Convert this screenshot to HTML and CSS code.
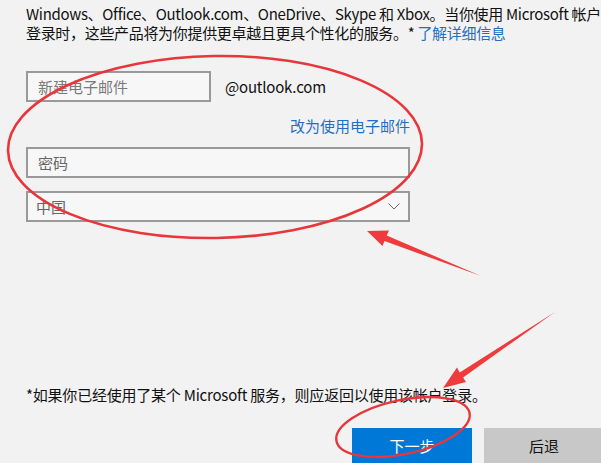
FILE: index.html
```html
<!DOCTYPE html>
<html lang="zh-CN">
<head>
<meta charset="utf-8">
<link rel="stylesheet" href="styles.css">
</head>
<body>
<div class="page">
  <p class="intro">Windows、Office、Outlook.com、OneDrive、Skype 和 Xbox。当你使用 Microsoft 帐户<br>登录时，这些产品将为你提供更卓越且更具个性化的服务。* <a class="link" href="#">了解详细信息</a></p>

  <div class="form">
    <div class="email-row">
      <div class="field field-email"><span class="placeholder">新建电子邮件</span></div>
      <span class="domain">@outlook.com</span>
    </div>
    <div class="switch-row"><a class="link" href="#">改为使用电子邮件</a></div>
    <div class="field field-wide"><span class="placeholder pw">密码</span></div>
    <div class="field field-wide select">
      <span class="select-value">中国</span>
      <svg class="chevron" width="12" height="7" viewBox="0 0 12 7"><path d="M0.5 0.5 L6 6 L11.5 0.5" fill="none" stroke="#6a6a6a" stroke-width="1"/></svg>
    </div>
  </div>

  <p class="note">*如果你已经使用了某个 Microsoft 服务，则应返回以使用该帐户登录。</p>

  <div class="buttons">
    <div class="btn btn-primary">下一步</div>
    <div class="btn btn-secondary">后退</div>
  </div>
</div>

<svg class="annotations" width="601" height="463" viewBox="0 0 601 463">
  <ellipse cx="215" cy="147" rx="207" ry="91" transform="rotate(-1 215 147)" fill="none" stroke="#e8363a" stroke-width="2.6"/>
  <ellipse cx="403" cy="427" rx="68" ry="27" transform="rotate(-12 403 427)" fill="none" stroke="#e8363a" stroke-width="2.4"/>
  <polygon points="367,231 389,230.5 386.7,235.5 481,276 384.5,241.1 382.5,246" fill="#ef3b3b"/>
  <polygon points="443,388 457,367.5 459.7,372.4 555,312 463.1,377.4 466,382" fill="#ef3b3b"/>
</svg>
</body>
</html>
```

FILE: styles.css
```css
html, body {
  margin: 0;
  padding: 0;
  width: 601px;
  height: 463px;
  overflow: hidden;
  background: #f2f2f2;
}

body {
  position: relative;
  font-family: "Noto Sans CJK SC", "Noto Sans", sans-serif;
  font-size: 15px;
  color: #111;
}

.page {
  display: flex;
  flex-direction: column;
  padding: 4px 0 0 26px;
}

.intro {
  margin: 0;
  line-height: 19px;
  letter-spacing: -0.32px;
  white-space: nowrap;
}

.link {
  color: #1f6fc5;
  text-decoration: none;
}

.form {
  display: flex;
  flex-direction: column;
  width: 384px;
  margin-top: 29px;
}

.email-row {
  display: flex;
  align-items: center;
  gap: 14px;
}

.field {
  box-sizing: border-box;
  height: 31px;
  border: 2px solid #999;
  background: #f7f7f7;
  display: flex;
  align-items: center;
}

.field-email {
  width: 185px;
}

.field-wide {
  width: 384px;
}

.placeholder {
  color: #7a7a7a;
  padding-left: 10px;
  line-height: 1;
}

.placeholder.pw {
  color: #666;
}

.domain {
  color: #111;
  line-height: 1;
  letter-spacing: -0.2px;
}

.switch-row {
  display: flex;
  justify-content: flex-end;
  line-height: 19px;
  margin: 14px 0 12px;
}

.select {
  margin-top: 13px;
  justify-content: space-between;
}

.select-value {
  color: #666;
  padding-left: 8px;
  line-height: 1;
}

.chevron {
  margin-right: 8px;
}

.note {
  margin: 163px 0 0;
  line-height: 19px;
  letter-spacing: -0.22px;
  white-space: nowrap;
}

.buttons {
  display: flex;
  justify-content: flex-end;
  gap: 12px;
  margin-top: 24px;
  margin-right: -3px;
}

.btn {
  width: 120px;
  height: 35px;
  display: flex;
  align-items: center;
  justify-content: center;
  font-size: 15px;
  padding-bottom: 1px;
  box-sizing: border-box;
}

.btn-primary {
  background: #0078d7;
  color: #fff;
}

.btn-secondary {
  background: #c8c8c8;
  color: #111;
}

.annotations {
  position: absolute;
  left: 0;
  top: 0;
  pointer-events: none;
}
```
